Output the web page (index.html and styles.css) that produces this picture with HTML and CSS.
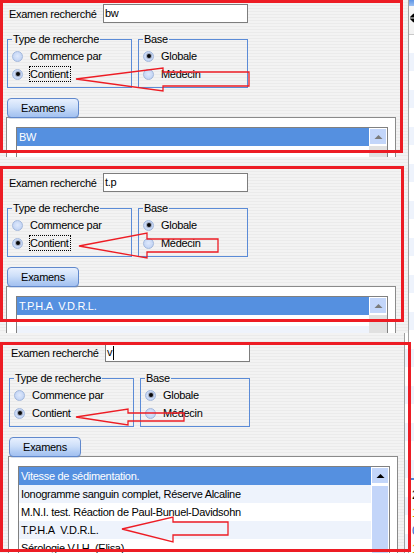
FILE: index.html
```html
<!DOCTYPE html>
<html lang="fr">
<head>
<meta charset="utf-8">
<title>Examen recherché</title>
<link rel="stylesheet" href="styles.css">
</head>
<body>
<div class="desk">
  <div class="stack">

    <section class="strip s1">
      <div class="crop">
        <div class="dlg">
          <div class="toprow"><span class="lbl">Examen recherché</span><div class="tb">bw</div></div>
          <div class="groups">
            <fieldset class="grp g1"><legend>Type de recherche</legend>
              <div class="opt"><span class="rb"></span><span class="ot">Commence par</span></div>
              <div class="opt"><span class="rb on"></span><span class="ot focus">Contient</span></div>
            </fieldset>
            <fieldset class="grp g2"><legend>Base</legend>
              <div class="opt"><span class="rb on"></span><span class="ot">Globale</span></div>
              <div class="opt"><span class="rb"></span><span class="ot">Médecin</span></div>
            </fieldset>
          </div>
          <div class="tab">Examens</div>
          <div class="page">
            <div class="list">
              <div class="rows">
                <div class="row sel">BW</div>
                <div class="row filler"></div>
              </div>
              <div class="sb">
                <div class="sbup"><svg width="9" height="6" viewBox="0 0 9 6"><polygon points="0.5,5 4.5,1 8.5,5" fill="#7b7b7b"/></svg></div>
                <div class="track"></div>
              </div>
            </div>
          </div>
        </div>
      </div>
      <div class="redbox rb1"></div>
      <svg class="arrow" width="414" height="157" viewBox="0 0 414 157"><polygon points="76,79 163,68 163,72 249,72 249,86 163,86 163,91" /></svg>
    </section>

    <section class="strip s2">
      <div class="crop">
        <div class="dlg">
          <div class="toprow"><span class="lbl">Examen recherché</span><div class="tb">t.p</div></div>
          <div class="groups">
            <fieldset class="grp g1"><legend>Type de recherche</legend>
              <div class="opt"><span class="rb"></span><span class="ot">Commence par</span></div>
              <div class="opt"><span class="rb on"></span><span class="ot focus">Contient</span></div>
            </fieldset>
            <fieldset class="grp g2"><legend>Base</legend>
              <div class="opt"><span class="rb on"></span><span class="ot">Globale</span></div>
              <div class="opt"><span class="rb"></span><span class="ot">Médecin</span></div>
            </fieldset>
          </div>
          <div class="tab">Examens</div>
          <div class="page">
            <div class="list">
              <div class="rows">
                <div class="row sel">T.P.H.A&nbsp; V.D.R.L.</div>
                <div class="row filler"></div>
              </div>
              <div class="sb">
                <div class="sbup"><svg width="9" height="6" viewBox="0 0 9 6"><polygon points="0.5,5 4.5,1 8.5,5" fill="#7b7b7b"/></svg></div>
                <div class="track"></div>
              </div>
            </div>
          </div>
        </div>
      </div>
      <div class="redbox rb2"></div>
      <svg class="arrow" width="414" height="176" viewBox="0 0 414 176"><polygon points="79,89 147,76 147,82 218,82 218,95 147,95 147,101" /></svg>
    </section>

    <section class="strip s3">
      <div class="crop">
        <div class="dlg">
          <div class="toprow"><span class="lbl">Examen recherché</span><div class="tb">v<span class="caret"></span></div></div>
          <div class="groups">
            <fieldset class="grp g1"><legend>Type de recherche</legend>
              <div class="opt"><span class="rb"></span><span class="ot">Commence par</span></div>
              <div class="opt"><span class="rb on"></span><span class="ot">Contient</span></div>
            </fieldset>
            <fieldset class="grp g2"><legend>Base</legend>
              <div class="opt"><span class="rb on"></span><span class="ot">Globale</span></div>
              <div class="opt"><span class="rb"></span><span class="ot">Médecin</span></div>
            </fieldset>
          </div>
          <div class="tab">Examens</div>
          <div class="page">
            <div class="list">
              <div class="rows">
                <div class="row sel">Vitesse de sédimentation.</div>
                <div class="row alt">Ionogramme sanguin complet, Réserve Alcaline</div>
                <div class="row">M.N.I. test. Réaction de Paul-Bunuel-Davidsohn</div>
                <div class="row alt">T.P.H.A&nbsp; V.D.R.L.</div>
                <div class="row">Sérologie V.I.H. (Elisa)</div>
              </div>
              <div class="sb active">
                <div class="sbup"><svg width="9" height="6" viewBox="0 0 9 6"><polygon points="0.5,5 4.5,1 8.5,5" fill="#000"/></svg></div>
                <div class="track"></div>
              </div>
            </div>
          </div>
        </div>
      </div>
      <div class="redbox rb3"></div>
      <svg class="arrow" width="414" height="220" viewBox="0 0 414 220">
        <polygon points="76,84 128,76 128,80 184,80 184,88 128,88 128,92" />
        <polygon points="122,196 173,184 173,189 228,189 228,202 173,202 173,209" />
      </svg>
    </section>

  </div>

  <aside class="side">
    <div class="side-head"><svg class="sorticon" width="7" height="10" viewBox="0 0 7 10"><polygon points="0,4 3.5,0.5 7,4" fill="#000"/><rect x="0" y="4.5" width="7" height="1" fill="#000"/><polygon points="0,6 7,6 3.5,9.5" fill="#000"/></svg></div>
    <div class="side-body"></div>
    <div class="side-win">
      <div class="dg d1">2</div>
      <div class="dg d2">1</div>
      <div class="dg d3">0</div>
      <div class="dg d2">1</div>
    </div>
  </aside>
</div>
</body>
</html>
```
FILE: styles.css
```css
* { box-sizing: border-box; }
html, body { margin: 0; padding: 0; }
body {
  width: 414px;
  height: 553px;
  overflow: hidden;
  font-family: "Liberation Sans", Arial, sans-serif;
  font-size: 11px;
  letter-spacing: -0.3px;
  color: #000;
}

.desk {
  display: flex;
  width: 414px;
  height: 553px;
  overflow: hidden;
  background-color: #fff;
  background-image: repeating-linear-gradient(to bottom, #eef3fc 0 18px, #fff 18px 37px);
  background-position: 0 16px;
}

.stack {
  width: 408px;
  flex: none;
  display: flex;
  flex-direction: column;
}

.strip { position: relative; flex: none; }
.s1 { height: 157px; }
.s2 { height: 176px; }
.s3 { height: 220px; }

.crop {
  height: 100%;
  overflow: hidden;
  background-color: #f0f0f0;
  background-image: repeating-linear-gradient(to bottom, #f3f3f3 0 2px, #ebebeb 2px 3px);
}
.s1 .crop, .s2 .crop { width: 408px; }
.s3 .crop { width: 405px; border-right: 1px solid #a0a0a0; }

.dlg { padding-top: 4px; }
.s2 .dlg { margin-top: 12px; }
.s3 .dlg { margin-top: 6px; margin-left: 2px; }

/* search row */
.toprow {
  display: flex;
  align-items: center;
  height: 19px;
  padding-left: 9px;
}
.lbl { width: 94px; flex: none; white-space: nowrap; }
.tb {
  width: 145px;
  height: 19px;
  flex: none;
  border: 1px solid #7d7d7d;
  background: #fff;
  padding-left: 1px;
  line-height: 17px;
  display: flex;
  align-items: center;
}
.caret {
  display: inline-block;
  width: 1px;
  height: 14px;
  background: #000;
  margin-left: 1px;
}

/* group boxes */
.groups {
  display: flex;
  gap: 6px;
  margin-top: 10px;
  padding-left: 7px;
}
.grp {
  margin: 0;
  border: 1px solid #5b8bd7;
  padding: 2px 0 4px 4px;
  min-width: 0;
}
.g1 { width: 125px; }
.g2 { width: 110px; }
.grp legend {
  padding: 0 1px;
  line-height: 12px;
  font-size: 11px;
  white-space: nowrap;
}
.opt {
  display: flex;
  align-items: center;
  height: 18px;
  white-space: nowrap;
}
.rb {
  width: 11px;
  height: 11px;
  flex: none;
  border-radius: 50%;
  border: 1px solid #a3b8dc;
  background: radial-gradient(circle at 50% 45%, #dfe9fc 0, #c5d6f5 65%, #b4c8ee 100%);
  margin-right: 6px;
  display: flex;
  align-items: center;
  justify-content: center;
}
.rb.on::after {
  content: "";
  width: 4px;
  height: 4px;
  border-radius: 50%;
  background: #080808;
  box-shadow: 0 0 0 1px rgba(70, 70, 80, 0.35);
}
.ot {
  border: 1px solid transparent;
  padding: 0 1px 0 0;
  line-height: 14px;
}
.ot.focus { border: 1px dotted #000; }

/* tab + page */
.tab {
  position: relative;
  z-index: 1;
  margin: 10px 0 0 7px;
  width: 72px;
  height: 20px;
  border: 1px solid #6088cc;
  border-radius: 4px;
  background: linear-gradient(#e8f0fe 0%, #cddff9 45%, #afcaf3 80%, #a3c1f0 100%);
  display: flex;
  align-items: center;
  justify-content: center;
  box-shadow: 0 1px 0 rgba(150, 170, 200, 0.4);
}
.page {
  margin: -1px 0 0 6px;
  width: 390px;
  height: 260px;
  border: 1px solid #8a8a8a;
  border-bottom: none;
  background: #fff;
  padding: 9px 7px 0 9px;
}
.list {
  height: 140px;
  border: 1px solid #808080;
  background: #fff;
  display: flex;
}
.rows { flex: 1; min-width: 0; overflow: hidden; }
.row {
  height: 18px;
  line-height: 18px;
  padding-left: 2px;
  white-space: nowrap;
}
.row.sel { background: #5590e0; color: #fff; }
.row.alt { background: #eef3fc; }
.row.filler { background: linear-gradient(#fff 0 11px, #eef3fc 11px); }

.sb {
  width: 18px;
  flex: none;
  display: flex;
  flex-direction: column;
  background: #fff;
}
.sbup {
  height: 17px;
  border: 1px solid #fff;
  background: #c3d6fa;
  display: flex;
  align-items: center;
  justify-content: center;
}
.track {
  flex: 1;
  margin-top: 1px;
  background: #e1e1e1;
}
.sb.active .track {
  background: #c3d5f9;
  border: 1px solid #fff;
}

/* annotations */
.redbox {
  position: absolute;
  left: 0;
  border: 3px solid #ed1c24;
  pointer-events: none;
}
.rb1 { top: 0; width: 403px; height: 153px; }
.rb2 { top: 9px; width: 404px; height: 156px; }
.rb3 { top: 9px; width: 411px; height: 210px; }
.arrow {
  position: absolute;
  left: 0;
  top: 0;
  overflow: visible;
  pointer-events: none;
}
.arrow polygon {
  fill: none;
  stroke: #ed1c24;
  stroke-width: 1.3;
  stroke-linejoin: miter;
}

/* window behind, at the right edge */
.side {
  flex: 1;
  display: flex;
  flex-direction: column;
  border-left: 1px solid #a2a2a2;
  overflow: hidden;
}
.side-head {
  height: 35px;
  flex: none;
  background: linear-gradient(#5d95e6 0, #9cc0f2 6px, #f7f7f7 6px, #f2f2f2 100%);
  border-bottom: 1px solid #c9c9c9;
  padding-top: 13px;
  padding-left: 1px;
}
.sorticon { display: block; }
.side-body { flex: 1; }
.side-win {
  height: 75px;
  flex: none;
  border-top: 2px solid #4f86d9;
  background: #fff;
  padding-left: 3px;
  padding-top: 6px;
  font-size: 12px;
  line-height: 18px;
  letter-spacing: 0;
}
.d1 { color: #000; }
.d2 { color: #d09a00; }
.d3 { color: #2a5cc8; }
```
